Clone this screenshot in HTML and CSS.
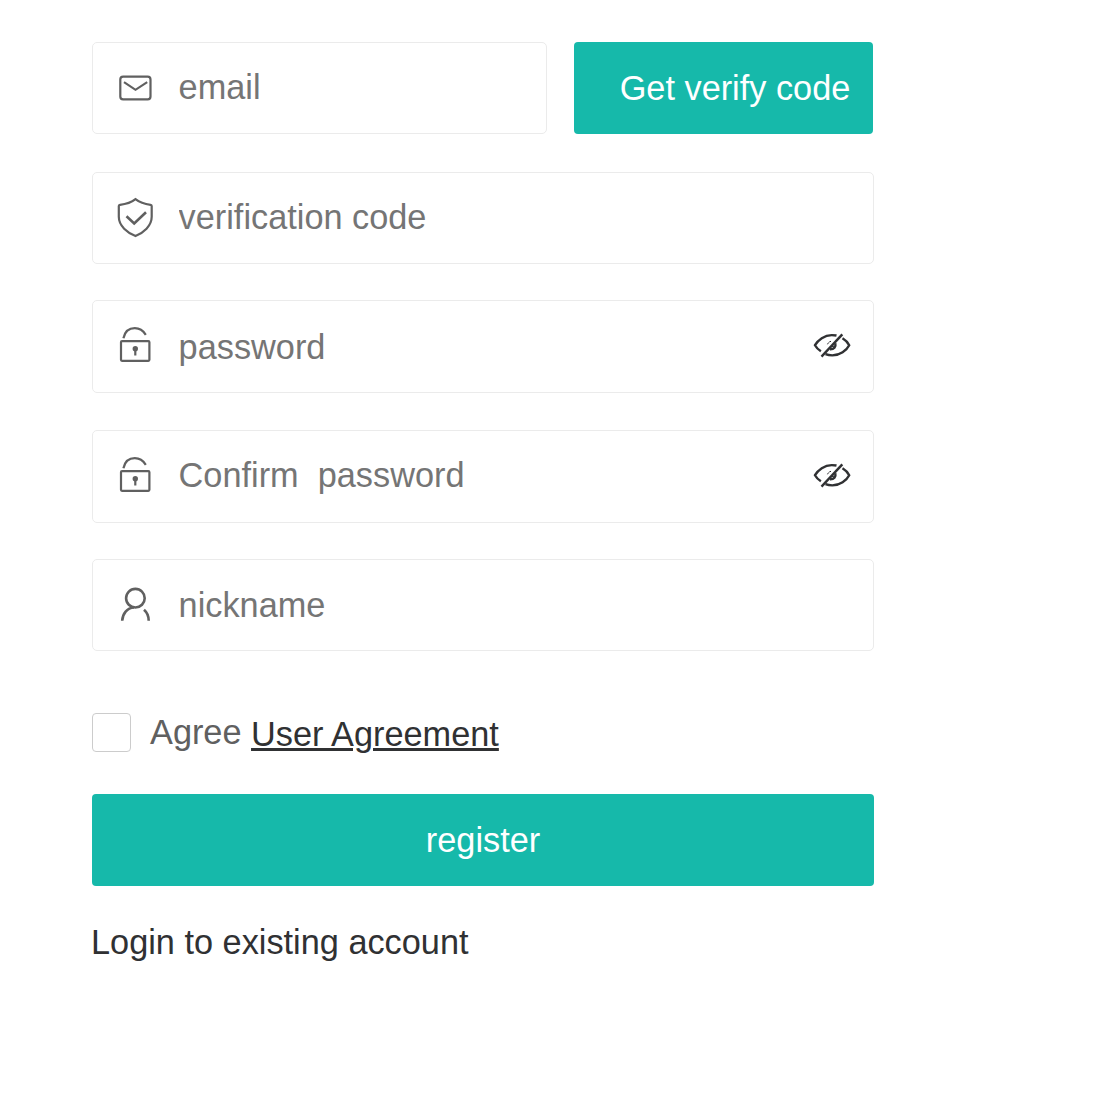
FILE: index.html
```html
<!DOCTYPE html>
<html lang="en">
<head>
<meta charset="utf-8">
<title>Register</title>
<link rel="stylesheet" href="styles.css">
</head>
<body>
<svg class="sprite" aria-hidden="true">
  <symbol id="lock" viewBox="0 0 40 44">
    <rect x="6" y="18.2" width="28.400" height="19.600" rx="1"/>
    <path d="M8.400 15.200C9.800 9 14 5.200 19.800 5.200c4.800 0 8.400 2.400 11 6.600"/>
    <circle class="solid" cx="20.300" cy="25.800" r="2.700"/>
    <path d="M20.300 26v6.500"/>
  </symbol>
  <symbol id="eye-off" viewBox="0 0 40 28">
    <path d="M24.500 3.500C23 3.200 21.500 3.100 19.700 3.100 12.500 3.100 6 8 3 13.200c1.200 2.200 3 4.200 5.900 6"/>
    <path d="M30.500 6.200c3 1.800 5.300 4.200 6.700 7C34.500 18.500 28 23.400 20.300 23.400c-2.500 0-4.800-.4-6.800-1.200"/>
    <path d="M30.300 2.400L9.500 24.600"/>
    <path d="M23.300 11.300c.9 3.500-1.300 6.200-5.300 6M20.500 13.800v1.400"/>
    <path class="glint" d="M15.500 12.300c.5-1.600 1.700-2.700 3.500-3"/>
  </symbol>
</svg>
<form class="form">
  <div class="row">
    <label class="field email">
      <svg class="icon" viewBox="0 0 40 44"><rect x="5.300" y="10.700" width="30.200" height="22.600" rx="2.800"/><path d="M9 16.200l11.500 7.600L32.200 16.200"/></svg>
      <input class="input" type="text" placeholder="email">
    </label>
    <button class="button code" type="button">Get verify code</button>
  </div>
  <label class="field verification">
    <svg class="icon" viewBox="0 0 40 44"><path d="M20.500 3.200c3.500 2.800 9.500 5 15 5.600.8.100 1.200.5 1.200 1.300v10.700c0 9.300-8.400 16-16.200 19.300-8-3.300-16.700-10-16.700-19.300V10.100c0-.8.400-1.200 1.200-1.300 6-.6 12-2.800 15.500-5.600z"/><path class="check" d="M11.500 20.200l7.700 7.200L31 16.200"/></svg>
    <input class="input" type="text" placeholder="verification code">
  </label>
  <label class="field password">
    <svg class="icon lock"><use href="#lock"/></svg>
    <input class="input" type="password" placeholder="password">
    <svg class="eye"><use href="#eye-off"/></svg>
  </label>
  <label class="field confirm">
    <svg class="icon lock"><use href="#lock"/></svg>
    <input class="input" type="password" placeholder="Confirm&nbsp; password">
    <svg class="eye"><use href="#eye-off"/></svg>
  </label>
  <label class="field nickname">
    <svg class="icon user" viewBox="0 0 40 44"><circle cx="20.400" cy="15.200" r="9.300"/><path d="M7.200 37.800C7.600 30.500 12 25 19 24.500M29 26.800c3.200 2.800 4.700 6.500 4.700 11"/></svg>
    <input class="input" type="text" placeholder="nickname">
  </label>
  <div class="agreement">
    <input class="checkbox" id="agree" type="checkbox">
    <label class="agree" for="agree">Agree</label>
    <a class="terms" href="#">User Agreement</a>
  </div>
  <button class="button register" type="submit">register</button>
  <a class="login" href="#">Login to existing account</a>
</form>
</body>
</html>
```
FILE: styles.css
```css
* {
  box-sizing: border-box;
}

body {
  margin: 0;
  background: #fff;
  color: #303133;
  font: 34.3px/40px Arial, "Liberation Sans", sans-serif;
}

.sprite {
  position: absolute;
  width: 0;
  height: 0;
}

.form {
  display: flex;
  flex-direction: column;
  width: 782px;
  margin: 42px 0 0 92px;
}

.row {
  display: flex;
  gap: 26.500px;
  margin-bottom: 38px;
}

.field {
  display: flex;
  align-items: center;
  height: 92px;
  padding: 0 21px 0 22px;
  border: 1px solid #ebebeb;
  border-radius: 5px;
}

.email {
  width: 455px;
}

.password {
  height: 93px;
  margin-top: 36px;
}

.confirm {
  height: 93px;
  margin-top: 37px;
}

.nickname {
  margin-top: 36px;
}

.icon {
  flex: none;
  width: 40px;
  height: 44px;
  margin: 0 23.600px 1px 0;
  fill: none;
  stroke: #606060;
  stroke-width: 2.200;
}

.lock {
  margin-bottom: 3px;
}

.icon .check,
.user {
  stroke-width: 2.600;
}

.user {
  margin-bottom: 0;
}

.solid {
  fill: #606060;
  stroke: none;
}

.input {
  flex: 1;
  min-width: 0;
  height: 40px;
  padding: 0;
  border: 0;
  outline: 0;
  background: none;
  color: #303133;
  font: inherit;
}

.input::placeholder {
  color: #757575;
}

.email .input,
.verification .input {
  margin-bottom: 2px;
}

.confirm .input {
  margin-bottom: 3px;
}

.eye {
  flex: none;
  width: 40px;
  height: 28px;
  margin-bottom: 2px;
  fill: none;
  stroke: #303133;
  stroke-width: 2.400;
}

.glint {
  stroke-width: 1;
  stroke-dasharray: 2 1;
}

.button {
  height: 92px;
  padding: 0;
  border: 0;
  border-radius: 4px;
  background: #16b9aa;
  color: #fff;
  font: inherit;
}

.code {
  width: 299px;
  padding: 0 0 0 24px;
}

.agreement {
  display: flex;
  align-items: flex-start;
  margin-top: 62px;
}

.checkbox {
  appearance: none;
  width: 39px;
  height: 39px;
  margin: 0 19px 0 0;
  border: 1px solid #ccc;
  border-radius: 4px;
  background: #fff;
}

.agree {
  margin: -1px 9.500px 0 0;
  color: #606060;
}

.terms {
  margin-top: 1px;
  color: #303133;
  text-decoration: underline;
  text-decoration-thickness: 2.500px;
}

.register {
  margin-top: 40px;
}

.agreement {
  height: 41px;
}

.login {
  align-self: flex-start;
  margin: 36px 0 0 -1px;
  color: #303133;
  text-decoration: none;
}
```
